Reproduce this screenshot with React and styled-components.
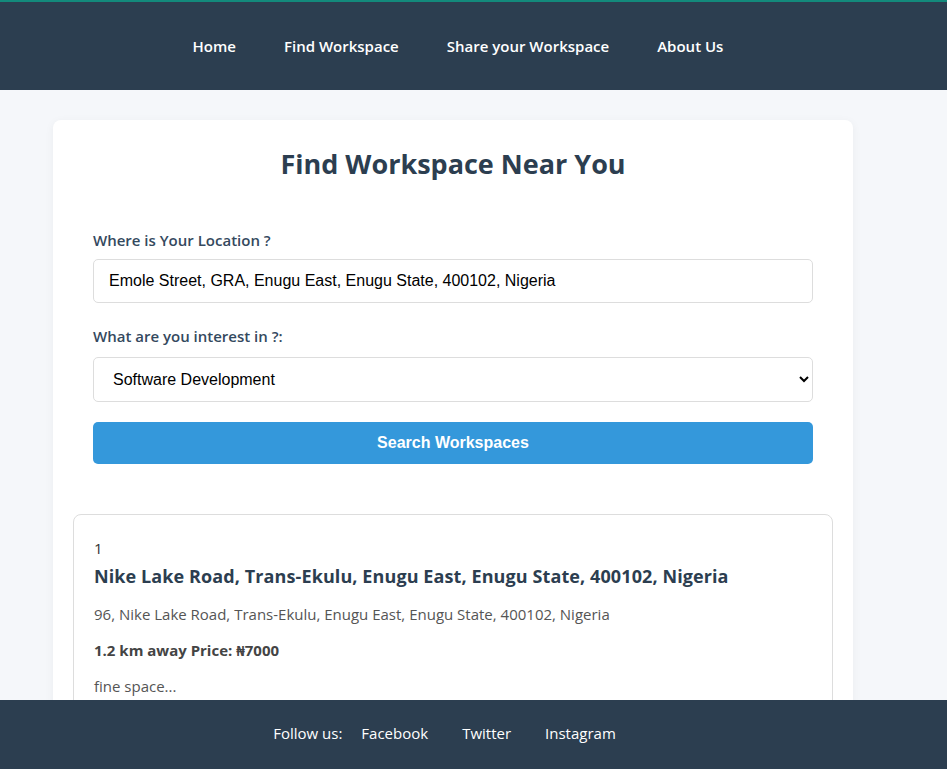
import React from "react";
import styled, { createGlobalStyle } from "styled-components";

const GlobalStyle = createGlobalStyle`
  html, body { margin: 0; padding: 0; }
  body {
    background: #f5f7fa;
    font-family: "Open Sans", "Noto Sans", sans-serif;
    color: #2c3e50;
    overflow: hidden;
  }
`;

const Header = styled.header`
  background: #2c3e50;
  border-top: 2px solid #138a7c;
  height: 88px;
  display: flex;
  align-items: center;
  justify-content: center;
  padding-right: 31px;
`;

const Nav = styled.nav`
  display: flex;
  gap: 48px;
`;

const NavLink = styled.a`
  color: #ffffff;
  font-weight: 600;
  font-size: 15px;
  text-decoration: none;
`;

const Main = styled.main`
  width: 906px;
  padding-top: 30px;
`;

const Card = styled.section`
  width: 800px;
  margin: 0 auto;
  box-sizing: border-box;
  background: #ffffff;
  border-radius: 8px;
  box-shadow: 0 2px 10px rgba(0, 0, 0, 0.05);
  padding: 26px 40px 40px;
`;

const Title = styled.h2`
  margin: 0 0 48px;
  text-align: center;
  font-size: 27px;
  line-height: 36px;
  font-weight: 700;
  color: #2c3e50;
`;

const Group = styled.div`
  margin-bottom: 23px;
`;

const Label = styled.label`
  display: block;
  font-size: 15px;
  line-height: 20px;
  font-weight: 600;
  color: #34495e;
  margin-bottom: ${(p) => p.$gap ?? 9}px;
`;

const fieldCss = `
  display: block;
  width: 100%;
  box-sizing: border-box;
  border: 1px solid #dddddd;
  border-radius: 5px;
  background: #ffffff;
  font-family: "Liberation Sans", Arial, sans-serif;
  font-size: 16px;
  color: #000000;
  outline: none;
`;

const Input = styled.input`
  ${fieldCss}
  height: 44px;
  padding: 0 15px;
`;

const Select = styled.select`
  ${fieldCss}
  height: 45px;
  padding: 0 15px;
`;

const Button = styled.button`
  display: block;
  width: 100%;
  height: 42px;
  margin-top: -3px;
  border: none;
  border-radius: 5px;
  background: #3498db;
  color: #ffffff;
  font-family: "Liberation Sans", Arial, sans-serif;
  font-weight: 700;
  font-size: 16px;
  cursor: pointer;
`;

const Results = styled.div`
  margin: 50px -20px 0;
`;

const ResultCard = styled.article`
  border: 1px solid #dddddd;
  border-radius: 8px;
  padding: 20px 20px;
  background: #ffffff;
`;

const Index = styled.div`
  font-size: 15px;
  line-height: 26px;
  color: #333;
`;

const ResultTitle = styled.h3`
  margin: 0 0 12px;
  font-size: 18px;
  line-height: 30px;
  font-weight: 700;
  letter-spacing: 0.1px;
  color: #2c3e50;
`;

const Line = styled.p`
  margin: 0 0 14px;
  font-size: 15px;
  line-height: 22px;
  color: ${(p) => (p.$strong ? "#444" : "#555")};
  font-weight: ${(p) => (p.$strong ? 700 : 400)};
`;

const Footer = styled.footer`
  position: fixed;
  left: 0;
  right: 0;
  bottom: 0;
  height: 69px;
  box-sizing: border-box;
  padding: 0 58px 3px 0;
  background: #2c3e50;
  color: #ffffff;
  display: flex;
  align-items: center;
  justify-content: center;
  font-size: 15px;
`;

const FollowText = styled.span`
  margin-right: 19px;
`;

const FooterLinks = styled.div`
  display: flex;
  gap: 34px;
`;

const FooterLink = styled.a`
  color: #ffffff;
  text-decoration: none;
`;

export default function App() {
  return (
    <>
      <GlobalStyle />
      <Header>
        <Nav>
          <NavLink href="#">Home</NavLink>
          <NavLink href="#">Find Workspace</NavLink>
          <NavLink href="#">Share your Workspace</NavLink>
          <NavLink href="#">About Us</NavLink>
        </Nav>
      </Header>
      <Main>
        <Card>
          <Title>Find Workspace Near You</Title>
          <Group>
            <Label htmlFor="loc">Where is Your Location ?</Label>
            <Input
              id="loc"
              defaultValue="Emole Street, GRA, Enugu East, Enugu State, 400102, Nigeria"
            />
          </Group>
          <Group>
            <Label htmlFor="interest" $gap={11}>What are you interest in ?:</Label>
            <Select id="interest" defaultValue="sd">
              <option value="sd">Software Development</option>
              <option value="design">Design</option>
            </Select>
          </Group>
          <Button>Search Workspaces</Button>
          <Results>
            <ResultCard>
              <Index>1</Index>
              <ResultTitle>
                Nike Lake Road, Trans-Ekulu, Enugu East, Enugu State, 400102, Nigeria
              </ResultTitle>
              <Line>96, Nike Lake Road, Trans-Ekulu, Enugu East, Enugu State, 400102, Nigeria</Line>
              <Line $strong>1.2 km away Price: ₦7000</Line>
              <Line>fine space...</Line>
              <Line>&nbsp;</Line>
            </ResultCard>
          </Results>
        </Card>
      </Main>
      <Footer>
        <FollowText>Follow us:</FollowText>
        <FooterLinks>
          <FooterLink href="#">Facebook</FooterLink>
          <FooterLink href="#">Twitter</FooterLink>
          <FooterLink href="#">Instagram</FooterLink>
        </FooterLinks>
      </Footer>
    </>
  );
}
